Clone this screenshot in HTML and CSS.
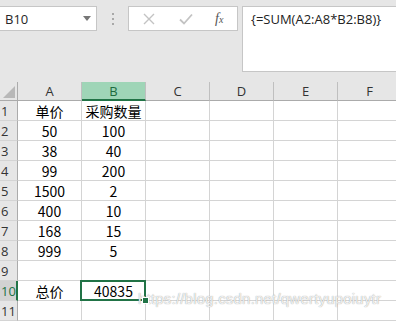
FILE: index.html
```html
<!DOCTYPE html>
<html lang="zh">
  <head>
    <meta charset="UTF-8" />
    <title>数组公式</title>
    <link rel="stylesheet" href="styles.css">
  </head>
  <body>
    <!-- 名称框 + 编辑栏 -->
    <div class="toolbar">
      <div class="name-box">
        <span>B10</span>
        <span class="caret"></span>
      </div>
      <div class="grip"><i></i><i></i><i></i></div>
      <div class="fx-buttons">
        <svg class="btn-icon" width="12" height="12" viewBox="0 0 12 12">
          <path d="M1 1 L11 11 M11 1 L1 11" stroke="#c3c3c3" stroke-width="1.4" fill="none" />
        </svg>
        <svg class="btn-icon" width="14" height="12" viewBox="0 0 14 12">
          <path d="M1 6.5 L5 10.5 L13 1.5" stroke="#c3c3c3" stroke-width="1.8" fill="none" />
        </svg>
        <span class="fx">f<small>x</small></span>
      </div>
      <div class="formula">{=SUM(A2:A8*B2:B8)}</div>
    </div>

    <!-- 表格 -->
    <div class="sheet">
      <div class="corner"><span></span></div>
      <div class="col-head">A</div>
      <div class="col-head active">B</div>
      <div class="col-head">C</div>
      <div class="col-head">D</div>
      <div class="col-head">E</div>
      <div class="col-head">F</div>

      <div class="row-head">1</div><div class="cell">单价</div><div class="cell">采购数量</div><div class="cell"></div><div class="cell"></div><div class="cell"></div><div class="cell"></div>
      <div class="row-head">2</div><div class="cell">50</div><div class="cell">100</div><div class="cell"></div><div class="cell"></div><div class="cell"></div><div class="cell"></div>
      <div class="row-head">3</div><div class="cell">38</div><div class="cell">40</div><div class="cell"></div><div class="cell"></div><div class="cell"></div><div class="cell"></div>
      <div class="row-head">4</div><div class="cell">99</div><div class="cell">200</div><div class="cell"></div><div class="cell"></div><div class="cell"></div><div class="cell"></div>
      <div class="row-head">5</div><div class="cell">1500</div><div class="cell">2</div><div class="cell"></div><div class="cell"></div><div class="cell"></div><div class="cell"></div>
      <div class="row-head">6</div><div class="cell">400</div><div class="cell">10</div><div class="cell"></div><div class="cell"></div><div class="cell"></div><div class="cell"></div>
      <div class="row-head">7</div><div class="cell">168</div><div class="cell">15</div><div class="cell"></div><div class="cell"></div><div class="cell"></div><div class="cell"></div>
      <div class="row-head">8</div><div class="cell">999</div><div class="cell">5</div><div class="cell"></div><div class="cell"></div><div class="cell"></div><div class="cell"></div>
      <div class="row-head">9</div><div class="cell"></div><div class="cell"></div><div class="cell"></div><div class="cell"></div><div class="cell"></div><div class="cell"></div>
      <div class="row-head active">10</div><div class="cell">总价</div><div class="cell selected">40835</div><div class="cell"></div><div class="cell"></div><div class="cell"></div><div class="cell"></div>
      <div class="row-head">11</div><div class="cell"></div><div class="cell"></div><div class="cell"></div><div class="cell"></div><div class="cell"></div><div class="cell"></div>
    </div>

    <div class="watermark">https://blog.csdn.net/qwertyupoiuytr</div>
  </body>
</html>
```

FILE: styles.css
```css
body {
  margin: 0;
  background: #e6e6e6;
  font-family: "Noto Sans CJK SC", sans-serif;
  overflow: hidden;
  position: relative;
  height: 321px;
}

/* 编辑栏 */
.toolbar {
  display: flex;
  align-items: flex-start;
  height: 82px;
  padding-top: 6px;
  box-sizing: border-box;
}
.name-box {
  width: 98px;
  height: 25px;
  margin-left: -1px;
  box-sizing: border-box;
  background: #fff;
  border: 1px solid #c6c6c6;
  display: flex;
  align-items: center;
  justify-content: space-between;
  padding: 0 5px 0 5px;
  font-family: "Open Sans", "Liberation Sans", sans-serif;
  font-size: 13px;
  color: #262626;
}
.caret {
  width: 0;
  height: 0;
  border-left: 4px solid transparent;
  border-right: 4px solid transparent;
  border-top: 5px solid #777;
}
.grip {
  width: 31px;
  height: 25px;
  display: flex;
  flex-direction: column;
  align-items: center;
  justify-content: center;
  gap: 3px;
}
.grip i {
  width: 2px;
  height: 2px;
  background: #a8a8a8;
}
.fx-buttons {
  width: 110px;
  height: 25px;
  box-sizing: border-box;
  background: #fff;
  border: 1px solid #c6c6c6;
  display: flex;
  align-items: center;
  padding-left: 14px;
  gap: 24px;
}
.fx {
  font-family: "Liberation Serif", serif;
  font-style: italic;
  font-size: 14px;
  color: #555;
  margin-left: -2px;
}
.fx small {
  font-size: 10px;
}
.formula {
  margin-left: 4px;
  flex: 1;
  height: 66px;
  box-sizing: border-box;
  background: #fff;
  border: 1px solid #c6c6c6;
  border-right: none;
  padding: 3px 0 0 8px;
  font-family: "Open Sans", "Liberation Sans", sans-serif;
  font-size: 13px;
  color: #222;
}

/* 工作表 */
.sheet {
  display: grid;
  grid-template-columns: 18px repeat(6, 64px);
  grid-template-rows: 19px repeat(11, 20px);
  background: #fff;
}
.corner,
.col-head,
.row-head {
  background: #e6e6e6;
  color: #333;
  font-family: "Open Sans", "Liberation Sans", sans-serif;
  font-size: 13px;
  box-sizing: border-box;
}
.corner {
  border-right: 1px solid #ababab;
  border-bottom: 1px solid #ababab;
  position: relative;
}
.corner span {
  position: absolute;
  right: 2px;
  bottom: 2px;
  width: 0;
  height: 0;
  border-left: 12px solid transparent;
  border-bottom: 12px solid #b8b8b8;
}
.col-head {
  border-right: 1px solid #bfbfbf;
  border-bottom: 1px solid #ababab;
  display: flex;
  align-items: center;
  justify-content: center;
}
.col-head.active {
  background: #9fd5b7;
  color: #1e6b40;
  border-bottom: 2px solid #217346;
}
.row-head {
  border-right: 1px solid #ababab;
  border-bottom: 1px solid #d4d4d4;
  display: flex;
  align-items: center;
  padding-left: 1px;
}
.row-head.active {
  background: #d2d2d2;
  color: #217346;
  border-right: 2px solid #217346;
}
.cell {
  border-right: 1px solid #d4d4d4;
  border-bottom: 1px solid #d4d4d4;
  box-sizing: border-box;
  display: flex;
  align-items: center;
  justify-content: center;
  font-size: 14px;
  color: #000;
  white-space: nowrap;
}
.cell.selected {
  position: relative;
}
.cell.selected::after {
  content: "";
  position: absolute;
  left: -2px;
  top: -1px;
  right: -1px;
  bottom: -1px;
  border: 2px solid #217346;
}
.cell.selected::before {
  content: "";
  position: absolute;
  right: -4px;
  bottom: -4px;
  width: 5px;
  height: 5px;
  background: #217346;
  border: 1px solid #fff;
  z-index: 1;
}

.watermark {
  position: absolute;
  left: 138px;
  top: 290px;
  font-family: "Liberation Sans", sans-serif;
  font-size: 15px;
  color: rgba(255, 255, 255, 0.85);
  text-shadow: 0 0 1px #8a8a8a;
  letter-spacing: 0.2px;
}
```
